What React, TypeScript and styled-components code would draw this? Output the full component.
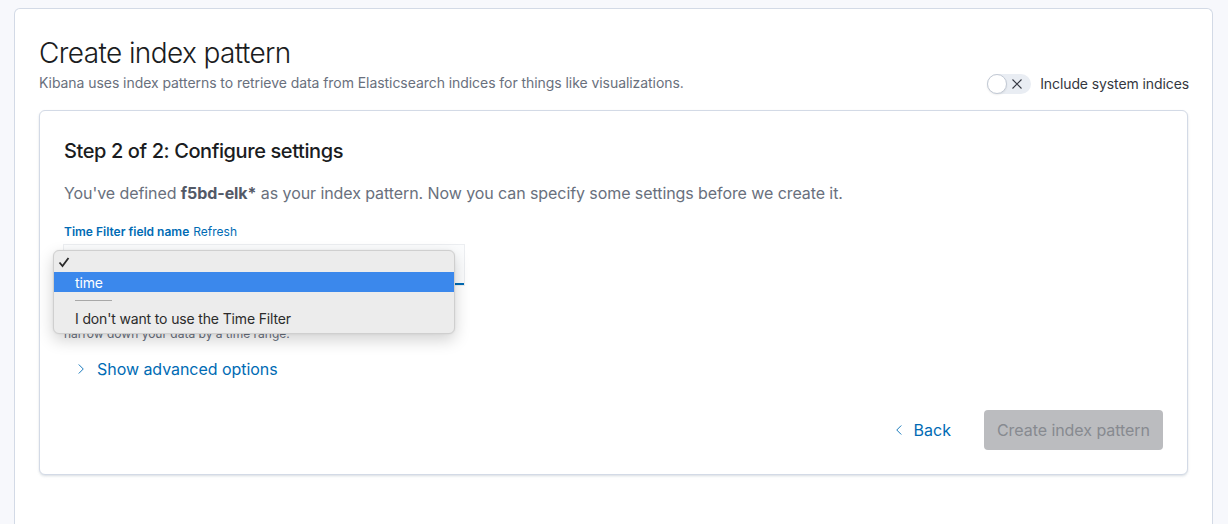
import React from "react";
import styled, { createGlobalStyle } from "styled-components";

const Global = createGlobalStyle`
  html, body { margin: 0; padding: 0; background: #f7f8fc; }
  body { font-family: Inter, "Noto Sans", sans-serif; color: #343741; -webkit-font-smoothing: antialiased; }
  * { box-sizing: border-box; }
`;

const Page = styled.div`
  padding: 8px 15px 0 14px;
  height: 524px;
  overflow: hidden;
`;

const OuterPanel = styled.div`
  background: #fff;
  border: 1px solid #d3dae6;
  border-bottom: none;
  border-radius: 6px 6px 0 0;
  padding: 24px 24px 60px 24px;
  min-height: 560px;
`;

const Header = styled.div`
  display: flex;
  align-items: flex-end;
  justify-content: space-between;
`;

const Title = styled.h1`
  margin: 0;
  font-size: 28px;
  line-height: 40px;
  font-weight: 300;
  color: #1a1c21;
  letter-spacing: -0.6px;
`;

const Subtitle = styled.p`
  margin: 0;
  font-size: 14px;
  line-height: 20px;
  color: #69707d;
  letter-spacing: -0.06px;
`;

const SwitchWrap = styled.label`
  display: flex;
  align-items: center;
  gap: 9px;
  font-size: 14px;
  line-height: 20px;
  color: #343741;
  letter-spacing: -0.1px;
  margin-right: -1px;
  margin-bottom: -1px;
`;

const Track = styled.span`
  position: relative;
  width: 44px;
  height: 20px;
  border-radius: 10px;
  background: #e9edf3;
  display: inline-block;
`;

const Knob = styled.span`
  position: absolute;
  left: 0;
  top: 0;
  width: 20px;
  height: 20px;
  border-radius: 50%;
  background: #fff;
  border: 1px solid #c2c9d4;
  box-shadow: 0 1px 2px rgba(0,0,0,0.08);
`;

const CrossIcon = styled.svg`
  position: absolute;
  right: 8px;
  top: 4px;
`;

const InnerPanel = styled.div`
  margin-top: 17px;
  background: #fff;
  border: 1px solid #d3dae6;
  border-radius: 6px;
  box-shadow: 0 1px 2px rgba(152,162,179,0.25), 0 2px 3px rgba(152,162,179,0.1);
  padding: 28px 24px 24px 24px;
`;

const StepTitle = styled.h2`
  margin: 0;
  font-size: 20px;
  line-height: 24px;
  font-weight: 500;
  color: #1a1c21;
  letter-spacing: -0.4px;
`;

const Lead = styled.p`
  margin: 18px 0 0 0;
  font-size: 16px;
  line-height: 24px;
  color: #69707d;
  letter-spacing: -0.08px;
  b { color: #535966; font-weight: 700; }
`;

const FormRow = styled.div`
  margin-top: 18px;
  width: 400px;
`;

const LabelRow = styled.div`
  display: flex;
  align-items: baseline;
  gap: 4px;
  font-size: 12px;
  line-height: 18px;
  margin-bottom: 4px;
`;

const Label = styled.span`
  font-weight: 600;
  color: #006bb4;
`;

const LinkText = styled.span`
  color: #006bb4;
`;

const SelectBox = styled.div`
  position: relative;
  height: 40px;
  background: #fbfcfd;
  box-shadow: 0 0 0 1px rgba(15,38,79,0.08), inset 0 -2px 0 0 #006bb4;
`;

const Menu = styled.div`
  position: absolute;
  left: -11px;
  top: 5px;
  width: 402px;
  height: 84px;
  background: #ececec;
  border: 1px solid #cfcfcf;
  border-radius: 6px;
  box-shadow: 0 6px 16px rgba(0,0,0,0.18), 0 0 2px rgba(0,0,0,0.08);
  padding: 1px 0 5px 0;
  font-family: Inter, "Noto Sans", sans-serif;
  font-size: 14px;
  letter-spacing: -0.15px;
  z-index: 5;
`;

const MenuItem = styled.div<{ $active?: boolean }>`
  height: 20px;
  display: flex;
  align-items: center;
  padding-left: 21px;
  position: relative;
  color: ${(p) => (p.$active ? "#fff" : "#2b2b2b")};
  background: ${(p) => (p.$active ? "#3b88ec" : "transparent")};
`;

const Check = styled.svg`
  position: absolute;
  left: 4px;
  top: 5px;
`;

const SeparatorRow = styled.div`
  height: 16px;
  display: flex;
  align-items: center;
  padding-left: 21px;
`;

const SeparatorLine = styled.span`
  width: 37px;
  height: 1px;
  background: #a8a8a8;
`;

const HelpText = styled.div`
  margin-top: 4px;
  font-size: 12px;
  line-height: 18px;
  color: #69707d;
  p { margin: 0; }
`;

const AdvancedButton = styled.div`
  margin-top: 14px;
  margin-left: 11px;
  display: flex;
  align-items: center;
  gap: 10px;
  font-size: 16px;
  line-height: 24px;
  color: #006bb4;
  letter-spacing: -0.05px;
`;

const Footer = styled.div`
  margin-top: 29px;
  display: flex;
  justify-content: flex-end;
  align-items: center;
  gap: 21px;
`;

const BackButton = styled.div`
  display: flex;
  align-items: center;
  gap: 9px;
  font-size: 16px;
  color: #006bb4;
  padding: 0 12px;
  height: 40px;
`;

const PrimaryButton = styled.div`
  height: 40px;
  padding: 0 13px;
  display: flex;
  align-items: center;
  border-radius: 4px;
  background: #bbbcbf;
  color: #878a90;
  font-size: 16px;
  letter-spacing: -0.05px;
`;

const ChevronRight = () => (
  <svg width="12" height="12" viewBox="0 0 16 16">
    <path d="M5 2 L11 8 L5 14" fill="none" stroke="#006bb4" strokeWidth="1.2" />
  </svg>
);

const ChevronLeft = () => (
  <svg width="12" height="12" viewBox="0 0 16 16">
    <path d="M11 2 L5 8 L11 14" fill="none" stroke="#006bb4" strokeWidth="1.2" />
  </svg>
);

export default function App() {
  return (
    <>
      <Global />
      <Page>
        <OuterPanel>
          <Header>
            <div>
              <Title>Create index pattern</Title>
              <Subtitle>
                Kibana uses index patterns to retrieve data from Elasticsearch indices for things like visualizations.
              </Subtitle>
            </div>
            <SwitchWrap>
              <Track>
                <Knob />
                <CrossIcon width="12" height="12" viewBox="0 0 12 12">
                  <path d="M1.5 1.5 L10.5 10.5 M10.5 1.5 L1.5 10.5" stroke="#343741" strokeWidth="1.1" fill="none" />
                </CrossIcon>
              </Track>
              Include system indices
            </SwitchWrap>
          </Header>
          <InnerPanel>
            <StepTitle>Step 2 of 2: Configure settings</StepTitle>
            <Lead>
              You've defined <b>f5bd-elk*</b> as your index pattern. Now you can specify some settings before we create it.
            </Lead>
            <FormRow>
              <LabelRow>
                <Label>Time Filter field name</Label>
                <LinkText>Refresh</LinkText>
              </LabelRow>
              <SelectBox>
                <Menu>
                  <MenuItem>
                    <Check width="12" height="11" viewBox="0 0 12 11">
                      <path d="M1.5 5.5 L4.5 9 L10.5 1" stroke="#2b2b2b" strokeWidth="1.8" fill="none" />
                    </Check>
                  </MenuItem>
                  <MenuItem $active>time</MenuItem>
                  <SeparatorRow>
                    <SeparatorLine />
                  </SeparatorRow>
                  <MenuItem>I don't want to use the Time Filter</MenuItem>
                </Menu>
              </SelectBox>
              <HelpText>
                <p>The Time Filter will use this field to filter your data by time.</p>
                <p>You can choose not to have a time field, but you will not be able to narrow down your data by a time range.</p>
              </HelpText>
            </FormRow>
            <AdvancedButton>
              <ChevronRight />
              Show advanced options
            </AdvancedButton>
            <Footer>
              <BackButton>
                <ChevronLeft />
                Back
              </BackButton>
              <PrimaryButton>Create index pattern</PrimaryButton>
            </Footer>
          </InnerPanel>
        </OuterPanel>
      </Page>
    </>
  );
}
